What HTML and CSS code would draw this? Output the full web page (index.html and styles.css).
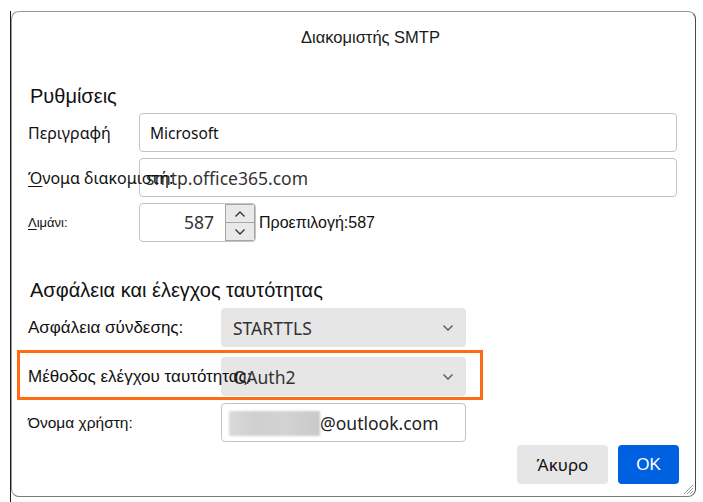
FILE: index.html
```html
<!DOCTYPE html>
<html lang="el">
<head>
<meta charset="utf-8">
<title>Διακομιστής SMTP</title>
<link rel="stylesheet" href="styles.css">
</head>
<body>
<div class="desk">
  <div class="dialog">
    <div class="title">Διακομιστής SMTP</div>
    <div class="content">
      <h2 class="sec sec1">Ρυθμίσεις</h2>
      <div class="form1">
        <label class="lbl lbl-big">Περιγραφή</label>
        <div class="field"><span class="val-seg">Microsoft</span></div>
        <label class="lbl lbl-big over"><u>Ό</u>νομα διακομιστή:</label>
        <div class="field field-shift"><span class="val">smtp.office365.com</span></div>
        <label class="lbl lbl-small"><u>Λ</u>ιμάνι:</label>
        <div class="port-row">
          <div class="spin">
            <span class="spin-val">587</span>
            <div class="spin-btns">
              <span class="spin-btn"><svg width="12" height="8" viewBox="0 0 12 8"><path d="M1.5 6.5 L6 2 L10.5 6.5" fill="none" stroke="#333" stroke-width="1.3"/></svg></span>
              <span class="spin-btn"><svg width="12" height="8" viewBox="0 0 12 8"><path d="M1.5 1.5 L6 6 L10.5 1.5" fill="none" stroke="#333" stroke-width="1.3"/></svg></span>
            </div>
          </div>
          <span class="default">Προεπιλογή:587</span>
        </div>
      </div>

      <h2 class="sec sec2">Ασφάλεια και έλεγχος ταυτότητας</h2>
      <div class="row row-first">
        <label class="lbl lbl-mid">Ασφάλεια σύνδεσης:</label>
        <div class="select"><span class="val">STARTTLS</span><svg class="chev" width="12" height="8" viewBox="0 0 12 8"><path d="M1.5 1.5 L6 6 L10.5 1.5" fill="none" stroke="#555" stroke-width="1.3"/></svg></div>
      </div>
      <div class="highlight">
        <div class="row">
          <label class="lbl lbl-mid over">Μέθοδος ελέγχου ταυτότητας:</label>
          <div class="select"><span class="val">OAuth2</span><svg class="chev" width="12" height="8" viewBox="0 0 12 8"><path d="M1.5 1.5 L6 6 L10.5 1.5" fill="none" stroke="#555" stroke-width="1.3"/></svg></div>
        </div>
      </div>
      <div class="row row-user">
        <label class="lbl lbl-user">Όνομα χρήστη:</label>
        <div class="field user"><span class="blur"></span><span class="val">@outlook.com</span></div>
      </div>
      <div class="actions">
        <button class="btn cancel">Άκυρο</button>
        <button class="btn ok">OK</button>
      </div>
    </div>
    <svg class="grip" width="12" height="12" viewBox="0 0 12 12"><path d="M11 2 L2 11 M11 5 L5 11 M11 8 L8 11" stroke="#999" stroke-width="1"/></svg>
  </div>
</div>
</body>
</html>
```

FILE: styles.css
```css
* { box-sizing: border-box; }
html, body { margin: 0; padding: 0; background: #fff; }
body { width: 703px; height: 502px; overflow: hidden; font-family: "Liberation Sans", Arial, sans-serif; color: #15141a; }

.desk {
  margin: 11px 0 0 10px;
  border-left: 1px solid #1a1a1a;
  height: 491px;
}

.dialog {
  position: relative;
  width: 685px;
  height: 486px;
  border: 1px solid #9a9a9a;
  border-right-color: #4a4a4a;
  border-bottom-color: #7a7a7a;
  border-radius: 8px;
  background: #fff;
}

.title {
  height: 50px;
  line-height: 50px;
  text-align: center;
  padding-left: 34px;
  font-size: 16.5px;
  color: #1a1a1a;
}

.content { padding: 0 16px; }

.sec {
  margin: 0;
  padding-left: 2px;
  font-weight: normal;
  font-size: 20px;
  line-height: 24px;
  color: #111;
}
.sec1 { margin-top: 22px; margin-bottom: 5px; }
.sec2 { margin-top: 36px; margin-bottom: 6px; }

.form1 {
  display: grid;
  grid-template-columns: 111px 538px;
  grid-auto-rows: 39px;
  row-gap: 6px;
  align-items: center;
}

.lbl { white-space: nowrap; color: #111; }
.lbl-big { font-family: "Noto Sans", sans-serif; font-size: 16px; }
.lbl-small { font-size: 13px; }
.lbl-mid { font-size: 17px; }
.lbl-user { font-size: 15.5px; }
.over { position: relative; z-index: 1; }
.lbl u { text-decoration-thickness: 1px; text-underline-offset: 2px; }

.field {
  height: 39px;
  border: 1px solid #c4c4c4;
  border-radius: 4px;
  background: #fff;
  display: flex;
  align-items: center;
  padding-left: 10px;
}
.field-shift { padding-left: 6px; }

.val {
  font-family: "Noto Sans", sans-serif;
  font-size: 17.5px;
  color: #333;
}
.val-seg {
  font-family: "Noto Sans", sans-serif;
  font-size: 15.5px;
  color: #111;
}

.port-row { display: flex; align-items: center; height: 39px; }
.spin {
  width: 117px;
  height: 39px;
  border: 1px solid #c4c4c4;
  border-radius: 4px;
  display: flex;
  overflow: hidden;
}
.spin-val {
  flex: 1;
  text-align: right;
  padding-right: 11px;
  font-family: "Noto Sans", sans-serif;
  font-size: 17.5px;
  line-height: 37px;
  color: #333;
}
.spin-btns { width: 30px; display: flex; flex-direction: column; }
.spin-btn {
  flex: 1;
  background: #e9e9e9;
  border: 1px solid #a6a6a6;
  display: flex;
  align-items: center;
  justify-content: center;
}
.spin-btn + .spin-btn { border-top: none; }
.default { margin-left: 3px; font-size: 16px; color: #111; }

.row {
  display: grid;
  grid-template-columns: 193px 245px;
  height: 39px;
  align-items: center;
}
.row-first { margin-bottom: 3px; }

.select {
  height: 39px;
  background: #e6e6e6;
  border-radius: 4px;
  display: flex;
  align-items: center;
  justify-content: space-between;
  padding: 0 12px 0 12px;
}
.chev { margin-top: 1px; }

.highlight {
  margin-left: -11px;
  width: 466px;
  border: 3px solid #ff6a13;
  padding: 4px 12px 1px 8px;
}

.row-user { margin-top: 3px; }
.user { padding-left: 7px; }
.blur {
  width: 91px;
  height: 25px;
  margin-top: 1px;
  background: linear-gradient(90deg, #d9d9d9 0%, #cfcfcf 30%, #d3d3d3 60%, #c9c9c9 100%);
  filter: blur(1px);
}
.user .val { color: #222; }

.actions {
  margin-top: 3px;
  display: flex;
  justify-content: flex-end;
  gap: 10px;
}
.btn {
  height: 39px;
  border: none;
  border-radius: 4px;
  font-family: "Liberation Sans", Arial, sans-serif;
  font-size: 16px;
  padding: 0;
}
.cancel { width: 91px; background: #e6e6e6; color: #111; font-family: "Noto Sans", sans-serif; font-size: 17px; }
.ok { width: 61px; background: #0061e0; color: #fff; font-size: 17px; }

.grip { position: absolute; right: 1px; bottom: 1px; }
```
